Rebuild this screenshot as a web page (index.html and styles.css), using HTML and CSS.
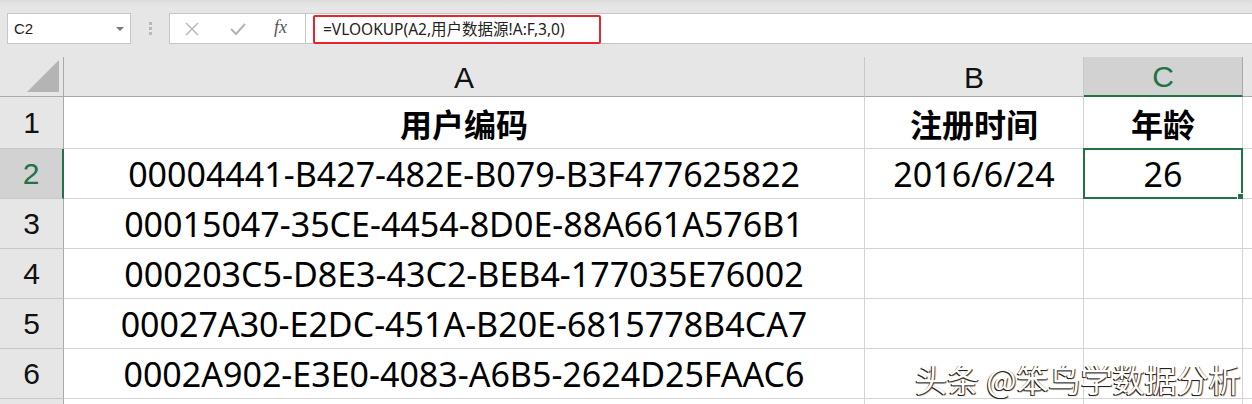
FILE: index.html
```html
<!DOCTYPE html>
<html lang="zh-CN">
<head>
    <meta charset="UTF-8">
    <title>VLOOKUP</title>
    <link rel="stylesheet" href="styles.css">
</head>
<body>
    <div class="toolbar">
        <div class="name-box">
            <span>C2</span>
            <svg class="caret" width="8" height="5" viewBox="0 0 8 5"><path d="M0 0h8L4 4z" fill="#777"/></svg>
        </div>
        <div class="grip"><i></i><i></i><i></i></div>
        <div class="fx-box">
            <svg width="14" height="14" viewBox="0 0 14 14"><path d="M1 1l12 12M13 1L1 13" stroke="#b4b4b4" stroke-width="1.4"/></svg>
            <svg width="16" height="14" viewBox="0 0 16 14"><path d="M1 7l5 5L15 2" stroke="#b4b4b4" stroke-width="2" fill="none"/></svg>
            <span class="fx">fx</span>
        </div>
        <div class="formula-box">
            <div class="formula">=VLOOKUP(A2,用户数据源!A:F,3,0)</div>
        </div>
    </div>

    <div class="sheet">
        <div class="corner"><span class="tri"></span></div>
        <div class="col-head">A</div>
        <div class="col-head">B</div>
        <div class="col-head active">C</div>
        <div class="col-head rest"></div>

        <div class="row-head">1</div>
        <div class="cell title">用户编码</div>
        <div class="cell title">注册时间</div>
        <div class="cell title">年龄</div>
        <div class="cell rest"></div>

        <div class="row-head active">2</div>
        <div class="cell">00004441-B427-482E-B079-B3F477625822</div>
        <div class="cell">2016/6/24</div>
        <div class="cell selected">26<span class="handle"></span></div>
        <div class="cell rest"></div>

        <div class="row-head">3</div>
        <div class="cell">00015047-35CE-4454-8D0E-88A661A576B1</div>
        <div class="cell"></div>
        <div class="cell"></div>
        <div class="cell rest"></div>

        <div class="row-head">4</div>
        <div class="cell">000203C5-D8E3-43C2-BEB4-177035E76002</div>
        <div class="cell"></div>
        <div class="cell"></div>
        <div class="cell rest"></div>

        <div class="row-head">5</div>
        <div class="cell">00027A30-E2DC-451A-B20E-6815778B4CA7</div>
        <div class="cell"></div>
        <div class="cell"></div>
        <div class="cell rest"></div>

        <div class="row-head">6</div>
        <div class="cell">0002A902-E3E0-4083-A6B5-2624D25FAAC6</div>
        <div class="cell"></div>
        <div class="cell"></div>
        <div class="cell rest"></div>

        <div class="row-head"></div>
        <div class="cell"></div>
        <div class="cell"></div>
        <div class="cell"></div>
        <div class="cell rest"></div>
    </div>

    <div class="watermark">头条 @笨鸟学数据分析</div>
</body>
</html>
```

FILE: styles.css
```css
body {
    margin: 0;
    width: 1252px;
    height: 404px;
    overflow: hidden;
    position: relative;
    background: #e6e6e6;
    font-family: "Noto Sans", "Noto Sans CJK SC", sans-serif;
}
.toolbar {
    display: flex;
    align-items: center;
    height: 57px;
    padding-left: 7px;
    box-sizing: border-box;
    background: linear-gradient(to bottom, #dcdcdc, #e6e6e6 6px);
}
.name-box {
    width: 124px;
    height: 31px;
    background: #fff;
    border: 1px solid #c6c6c6;
    box-sizing: border-box;
    display: flex;
    align-items: center;
    justify-content: space-between;
    padding: 0 6px 0 6px;
    font-family: "Liberation Sans", sans-serif;
    font-size: 15px;
    color: #222;
}
.caret {
    margin-top: 1px;
}
.grip {
    width: 38px;
    display: flex;
    flex-direction: column;
    align-items: center;
    gap: 2px;
}
.grip i {
    width: 3px;
    height: 3px;
    background: #b9b9b9;
}
.fx-box {
    width: 137px;
    height: 31px;
    background: #fff;
    border: 1px solid #c6c6c6;
    box-sizing: border-box;
    display: flex;
    align-items: center;
    padding-left: 15px;
}
.fx-box svg:first-child {
    margin-right: 31px;
}
.fx-box svg:nth-child(2) {
    margin-right: 28px;
}
.fx {
    font-family: "Liberation Serif", serif;
    font-style: italic;
    font-size: 18px;
    color: #555;
    margin-top: -2px;
}
.formula-box {
    flex: 1;
    height: 31px;
    margin-left: -1px;
    background: #fff;
    border: 1px solid #c6c6c6;
    border-right: none;
    box-sizing: border-box;
    padding: 1px 0 0 7px;
}
.formula {
    width: 288px;
    height: 29px;
    box-sizing: border-box;
    border: 2px solid #e3262f;
    border-radius: 2px;
    font-size: 15.5px;
    line-height: 24px;
    padding-left: 8px;
    color: #222;
}

.sheet {
    display: grid;
    grid-template-columns: 64px 801px 219px 159px 9px;
    grid-template-rows: 40px 52px repeat(5, 50px) 20px;
}
.corner {
    background: #e6e6e6;
    border-right: 1px solid #a9a9a9;
    border-bottom: 1px solid #a9a9a9;
    position: relative;
}
.tri {
    position: absolute;
    right: 4px;
    bottom: 4px;
    width: 0;
    height: 0;
    border-left: 32px solid transparent;
    border-bottom: 32px solid #b4b4b4;
}
.col-head {
    background: #e6e6e6;
    border-right: 1px solid #c8c8c8;
    border-bottom: 1px solid #a9a9a9;
    display: flex;
    align-items: center;
    justify-content: center;
    font-family: "Liberation Sans", sans-serif;
    font-size: 30px;
    color: #111;
    padding-top: 2px;
}
.col-head.active {
    background: #d2d2d2;
    color: #217346;
    border-bottom: 2px solid #217346;
    border-right-color: #a9a9a9;
}
.col-head.rest {
    border-right: none;
}
.row-head {
    background: #e6e6e6;
    border-right: 1px solid #a9a9a9;
    border-bottom: 1px solid #c8c8c8;
    display: flex;
    align-items: center;
    justify-content: center;
    font-family: "Liberation Sans", sans-serif;
    font-size: 30px;
    color: #111;
}
.row-head.active {
    background: #d2d2d2;
    color: #217346;
    border-right: 2px solid #217346;
}
.cell {
    background: #fff;
    border-right: 1px solid #d4d4d4;
    border-bottom: 1px solid #d4d4d4;
    display: flex;
    align-items: center;
    justify-content: center;
    font-size: 34px;
    color: #000;
    position: relative;
}
.cell.rest {
    border-right: none;
}
.cell.title {
    font-family: "Noto Sans CJK SC", sans-serif;
    font-weight: 700;
    font-size: 32px;
}
.cell.selected {
    border: 2px solid #217346;
    margin: -1px 0 0 -1px;
}
.handle {
    position: absolute;
    right: -4px;
    bottom: -4px;
    width: 6px;
    height: 6px;
    background: #217346;
    border: 1px solid #fff;
}
.watermark {
    position: absolute;
    left: 915px;
    top: 355px;
    font-family: "Noto Sans CJK SC", sans-serif;
    font-size: 32px;
    color: #fff;
    text-shadow: -1px 1px 0 #222, 1px 1px 1px #333;
}
```
